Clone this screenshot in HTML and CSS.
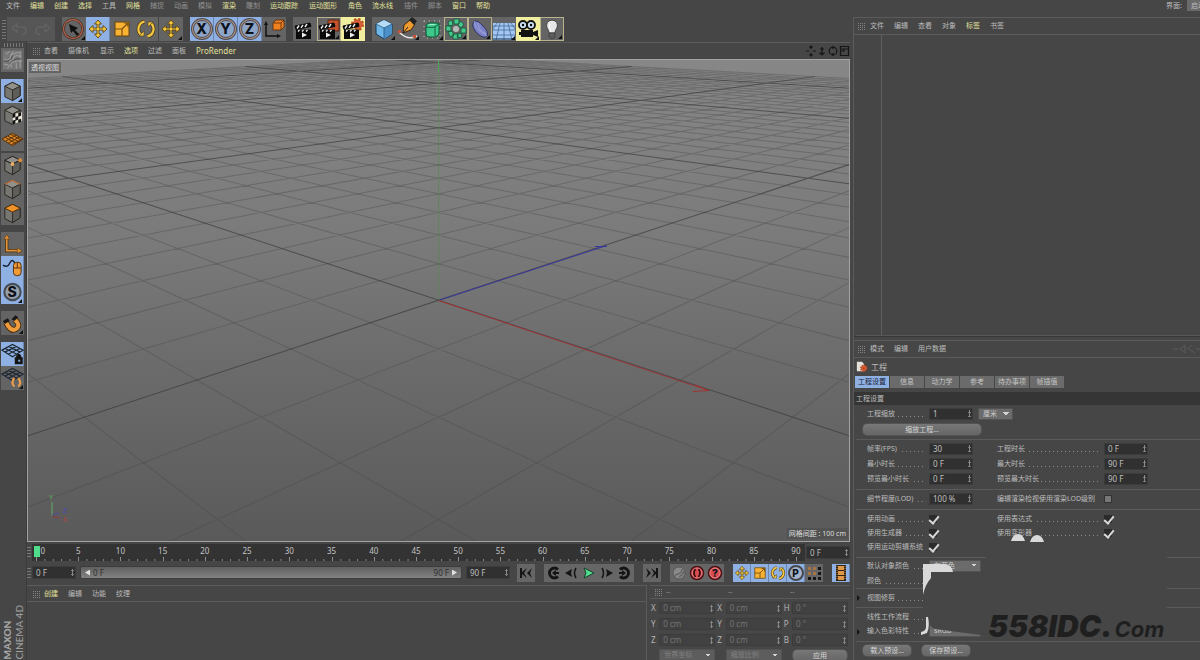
FILE: index.html
```html
<!DOCTYPE html>
<html lang="zh-CN">
<head>
<meta charset="utf-8">
<title>CINEMA 4D</title>
<link rel="stylesheet" href="styles.css">
</head>
<body>
<svg class="defs" aria-hidden="true">
  <symbol id="undo" viewBox="0 0 24 24"><path d="M5 11l5-4v3h5q4 0 4 4t-4 3M5 11l5 4v-3" fill="none" stroke="#636363" stroke-width="1.5"/></symbol>
  <symbol id="redo" viewBox="0 0 24 24"><path d="M19 11l-5-4v3H9q-4 0-4 4t4 3M19 11l-5 4v-3" fill="none" stroke="#636363" stroke-width="1.5"/></symbol>
  <symbol id="pick" viewBox="0 0 24 24"><circle cx="11" cy="12" r="9.500" fill="none" stroke="#3a2722" stroke-width="2.500"/><circle cx="11" cy="12" r="9.500" fill="none" stroke="#b0614a" stroke-width="1.300"/><path d="M7 7l2 9 2-2 4 5 2-2-4-4 3-2z" fill="#111"/></symbol>
  <symbol id="move" viewBox="0 0 24 24"><path d="M12 3l3.500 4H13v4h4V8.500l4 3.500-4 3.500V13h-4v4h2.500L12 21l-3.500-4H11v-4H7v2.500L3 12l4-3.500V11h4V7H8.500z" fill="#f6c83d" stroke="#594215" stroke-width=".9"/></symbol>
  <symbol id="scale" viewBox="0 0 24 24"><path d="M5 5h14v14H5z" fill="#f9b233" stroke="#66430f"/><path d="M5 12h7v7M12 12l6-6M14 6h4v4" fill="none" stroke="#76500f" stroke-width="1.200"/></symbol>
  <symbol id="rot" viewBox="0 0 24 24"><path d="M10.500 4.700a7.500 7.500 0 0 0-3.500 13M13.500 19.300a7.500 7.500 0 0 0 3.500-13" fill="none" stroke="#4d3b16" stroke-width="3.800"/><path d="M10.500 4.700a7.500 7.500 0 0 0-3.500 13M13.500 19.300a7.500 7.500 0 0 0 3.500-13" fill="none" stroke="#f2c643" stroke-width="2.200"/><path d="M5 19h5v-5zM19 5h-5v5z" fill="#f2c643" stroke="#4d3b16" stroke-width=".6"/></symbol>
  <symbol id="ring" viewBox="0 0 24 24"><circle cx="12" cy="12" r="9.500" fill="#8ea5c8" stroke="#4a4a50" stroke-width="3"/><circle cx="12" cy="12" r="9.500" fill="none" stroke="#a98f80" stroke-width="1.200"/></symbol>
  <symbol id="coord" viewBox="0 0 24 24"><path d="M4 7v12h13" fill="none" stroke="#111" stroke-width="1.500"/><path d="M2 8l2-4 2 4zM15 17l4 2-4 2z" fill="#111"/><path d="M11 6l3-3h8v7l-3 3h-8z" fill="#ef8120" stroke="#56290b" stroke-width=".8"/><path d="M11 6h8v7M19 6l3-3" fill="none" stroke="#56290b" stroke-width=".8"/></symbol>
  <symbol id="clap" viewBox="0 0 24 24"><path d="M3 13h15v9H3z" fill="#0b0b0b"/><path d="M3 12.500L2 9l15-3 1 3.500zM3 13h15" fill="#0b0b0b" stroke="#0b0b0b"/><path d="M4 11.500l2-3M8 10.800l2-3M12 10l2-3M5 14.500l1.500-1.500M9 14.500l1.500-1.500M13 14.500l1.500-1.500" stroke="#eee" stroke-width="1.400"/><path d="M9 15.500l5 2.500-5 2.500z" fill="#eee"/></symbol>
  <symbol id="clapbox" viewBox="0 0 24 24"><path d="M11 3h11v11H11z" fill="#c4522c" stroke="#5d2311"/><use href="#clap"/></symbol>
  <symbol id="gear" viewBox="0 0 24 24"><circle cx="12" cy="12" r="8" fill="none" stroke="#c24e27" stroke-width="5" stroke-dasharray="3.500 2.780"/><circle cx="12" cy="12" r="7.500" fill="#dc6035" stroke="#a8431f"/><circle cx="12" cy="12" r="3" fill="#a53d1e"/></symbol>
  <symbol id="clapgear" viewBox="0 0 24 24"><use href="#gear" x="9" y="0" width="15" height="15"/><use href="#clap"/></symbol>
  <symbol id="cubeblue" viewBox="0 0 24 24"><path d="M12 3l8 4v10l-8 5-8-5V7z" fill="#6fb6e9" stroke="#173955"/><path d="M4 7l8-4 8 4-8 4z" fill="#b4dcf6"/><path d="M12 11l8-4v10l-8 5z" fill="#4a91c9"/><path d="M4 7l8 4 8-4M12 11v10" fill="none" stroke="#25567e" stroke-width=".8"/></symbol>
  <symbol id="pen" viewBox="0 0 24 24"><path d="M3 15q9 9 18 4" fill="none" stroke="#e5e5e5" stroke-width="1.500"/><path d="M7 16l1-8 6-5 5 4-4 6z" fill="#ee9b32" stroke="#3c250b"/><path d="M13 3l3-3 5 4-3 4z" fill="#242424"/><path d="M7 16l5-6" stroke="#222"/><path d="M2 13h3v3H2zM17 18h3v3h-3z" fill="#c7533a"/></symbol>
  <symbol id="sds" viewBox="0 0 24 24"><path d="M4 4h16v17H4z" fill="none" stroke="#b8c6bd" stroke-width="1" stroke-dasharray="1 4"/><path d="M6 9q0-2 3-3h8q3 0 2 3v7q0 3-4 4H9q-3 0-3-3z" fill="#3ec98b" stroke="#0d5534"/><path d="M6 10q5 1 9 0l4-3M15 10v9" fill="none" stroke="#116040"/><path d="M8 8l2-1h6l-2 1z" fill="#a6f2cb"/></symbol>
  <symbol id="array" viewBox="0 0 24 24"><g fill="#45c889" stroke="#135638" stroke-width=".8"><path d="M10 2h5v5h-5zM16 4l4 3-3 4-3-3zM17 11h5v5h-5zM14 16l4 1-1 4-4-1zM9 17h5v5H9zM4 15l4-1 2 4-4 2zM2 9h5v5H2zM4 5l4-2 1 5-4 1z"/></g><circle cx="12" cy="12" r="3" fill="#b4bdb8"/></symbol>
  <symbol id="bend" viewBox="0 0 24 24"><path d="M6 4q-4 6 5 14 6 4 8 1 2-4-4-10-5-6-9-5z" fill="#7c82c7" stroke="#2e315f"/><path d="M6 4q0 6 6 10t7 5M10 6q0 7 8 11" fill="none" stroke="#a4a8dc" stroke-width=".8"/></symbol>
  <symbol id="floor" viewBox="0 0 24 24"><path d="M1 6h22v17H1z" fill="#a3c7f0"/><path d="M1 9h22M1 13h22M1 18h22M12 6v17M8 6L4 23M16 6l4 17M5 6l-4 6M19 6l4 6" stroke="#456b9c" stroke-width=".8" fill="none"/><path d="M1 22h22" stroke="#1b3050"/></symbol>
  <symbol id="cam" viewBox="0 0 24 24"><circle cx="7" cy="8" r="4" fill="#cddff2" stroke="#111" stroke-width="1.800"/><circle cx="15" cy="8" r="4" fill="#cddff2" stroke="#111" stroke-width="1.800"/><circle cx="7" cy="8" r="1.200"/><circle cx="15" cy="8" r="1.200"/><path d="M5 13h12v2l5-2v7l-5-2v2H5v-2H3v-3h2z" fill="#101010"/></symbol>
  <symbol id="bulb" viewBox="0 0 24 24"><path d="M9 16q0-3-2-5-2-7 5-8 7 1 5 8-2 2-2 5z" fill="#e6e6e6" stroke="#444"/><path d="M10 7q-2 3 1 8" stroke="#fff" fill="none"/><path d="M9 16h6v4l-3 2-3-2z" fill="#5e5e5e" stroke="#333" stroke-width=".7"/></symbol>
  <symbol id="mesh" viewBox="0 0 24 24"><path d="M2 2h20v20H2z" fill="#777"/><path d="M3 11q5 3 7-2t11-5M3 16q7 3 9-4t9-3M7 21q2-9 15-8M13 3q-6 5-2 17M5 6l4-3M16 15v6M20 5v15" fill="none" stroke="#999" stroke-width="1.300"/><path d="M3 13q7 2 9-6M8 17q6-8 13-6" fill="none" stroke="#4c4c4c"/></symbol>
  <symbol id="cube" viewBox="0 0 24 24"><path d="M12 3l8 4v10l-8 5-8-4V7z" fill="#777772" stroke="#292522"/><path d="M4 7l8-4 8 4-8 4z" fill="#92908b" stroke="#302b25"/><path d="M12 11l8-4v10l-8 5z" fill="#5e5d59" stroke="#302b25"/></symbol>
  <symbol id="tex" viewBox="0 0 24 24"><use href="#cube"/><path d="M12 11l10-2v9l-10 4z" fill="#eee8dc"/><path d="M12 11l3-1v4l-3 1zM18 9.800l3-.6v3.600l-3 1zM15 14l3-1v4l-3 1zM12 18l3-1v3.800l-3 1.200zM18 17l3-1v3l-3 1z" fill="#111"/></symbol>
  <symbol id="plane" viewBox="0 0 24 24"><path d="M1 12l11-6 11 6-11 7z" fill="#d88427" stroke="#553007"/><path d="M4 10l12 7M7 9l12 6M10 7l11 6M5 14L16 8M8 16l11-6M11 18l11-6" stroke="#553007"/></symbol>
  <symbol id="points" viewBox="0 0 24 24"><use href="#cube"/><path d="M4 7l8 4 8-4" fill="none" stroke="#29241f"/><circle cx="12" cy="11" r="2" fill="#efae5c"/><circle cx="20" cy="7" r="2" fill="#e48f35"/></symbol>
  <symbol id="edges" viewBox="0 0 24 24"><use href="#cube"/><path d="M4 7l8-4 8 4" fill="none" stroke="#c9783e" stroke-width="1.200"/></symbol>
  <symbol id="polys" viewBox="0 0 24 24"><use href="#cube"/><path d="M4 7l8-4 8 4-8 4z" fill="#ef9228" stroke="#5e350c"/></symbol>
  <symbol id="axis" viewBox="0 0 24 24"><path d="M6 4v15h14" fill="none" stroke="#462c0d" stroke-width="3.400"/><path d="M6 4v15h14" fill="none" stroke="#e2933a" stroke-width="1.800"/><path d="M3 7l3-5 3 5zM17 16l5 3-5 3z" fill="#e2933a" stroke="#462c0d" stroke-width=".5"/></symbol>
  <symbol id="mouse" viewBox="0 0 24 24"><path d="M2 9q5 3 7-2 3-6 6 1" fill="none" stroke="#172236" stroke-width="1.500"/><rect x="13" y="6" width="8" height="14" rx="3.500" fill="#f29a36" stroke="#51300d"/><path d="M13 12h8M17 6v6" stroke="#51300d"/></symbol>
  <symbol id="snaps" viewBox="0 0 24 24"><circle cx="12" cy="12" r="8.500" fill="#98a0aa" stroke="#454b54" stroke-width="2.200"/></symbol>
  <symbol id="magnet" viewBox="0 0 24 24"><path d="M5 11l3 5q4 5 8 2 5-4-2-10" fill="none" stroke="#45280a" stroke-width="6"/><path d="M5 11l3 5q4 5 8 2 5-4-2-10" fill="none" stroke="#ef9d3c" stroke-width="4.200"/><path d="M2 10l5-3 2 3-5 3zM11 8l4-4 3 2-4 4z" fill="#171717"/></symbol>
  <symbol id="wire" viewBox="0 0 24 24"><path d="M1 8l11-6 11 6-11 7zM4 6l12 6M8 4l12 6M4 10l12-6M8 12l12-6" fill="none" stroke="#1d2733" stroke-width="1.300"/></symbol>
  <symbol id="wirelock" viewBox="0 0 24 24"><use href="#wire"/><path d="M15 16h7v6h-7zM16.500 16v-2q2-3 4 0v2" fill="#151515" stroke="#151515" stroke-width="1.300"/><path d="M18 18h2v2h-2z" fill="#8eb0df"/></symbol>
  <symbol id="wirerot" viewBox="0 0 24 24"><use href="#wire"/><path d="M14 12q-4 5 0 9M18 12q4 5 0 9" fill="none" stroke="#e99d4a" stroke-width="2.200"/></symbol>
  <symbol id="first" viewBox="0 0 18 18"><path d="M3 4h2v4l5-4-3 5 3 5-5-4v4H3zM10 9l5-5-2 5 2 5z" fill="#151515"/></symbol>
  <symbol id="last" viewBox="0 0 18 18"><path d="M15 4h-2v4L8 4l3 5-3 5 5-4v4h2zM8 9L3 4l2 5-2 5z" fill="#151515"/></symbol>
  <symbol id="prevkey" viewBox="0 0 18 18"><path d="M14 5.500A5 5 0 1 0 14 12.500" fill="none" stroke="#151515" stroke-width="2.800"/><path d="M8 9l4-3v2h3v2h-3v2z" fill="#151515"/></symbol>
  <symbol id="nextkey" viewBox="0 0 18 18"><path d="M4 5.500A5 5 0 1 1 4 12.500" fill="none" stroke="#151515" stroke-width="2.800"/><path d="M10 9L6 6v2H3v2h3v2z" fill="#151515"/></symbol>
  <symbol id="prev" viewBox="0 0 18 18"><path d="M3 9l7-4-1 4 1 4z" fill="#151515"/><path d="M14 4q-3 5 0 10" fill="none" stroke="#151515" stroke-width="1.500"/></symbol>
  <symbol id="next" viewBox="0 0 18 18"><path d="M15 9L8 5l1 4-1 4z" fill="#151515"/><path d="M4 4q3 5 0 10" fill="none" stroke="#151515" stroke-width="1.500"/></symbol>
  <symbol id="play" viewBox="0 0 18 18"><path d="M4 4l10 5-10 5 2-5z" fill="#54df91" stroke="#133f28"/></symbol>
  <symbol id="key" viewBox="0 0 18 18"><circle cx="9" cy="9" r="6" fill="#898989" stroke="#5b5b5b"/><path d="M5 14q-1-3 3-4 4-1 4-5M9 13q4-2 5-6" fill="none" stroke="#636363" stroke-width="1.300"/></symbol>
  <symbol id="red" viewBox="0 0 18 18"><circle cx="9" cy="9" r="6.500" fill="#d84d50" stroke="#4b1215" stroke-width="1.500"/><circle cx="9" cy="9" r="5" fill="none" stroke="#ef9a98" stroke-width=".7"/></symbol>
  <symbol id="record" viewBox="0 0 18 18"><use href="#red"/><path d="M7.500 5q-3 4 0 8M10.500 5q3 4 0 8" fill="none" stroke="#360d10" stroke-width="1.700"/></symbol>
  <symbol id="pring" viewBox="0 0 18 18"><circle cx="9" cy="9" r="7" fill="#a5b4cb" stroke="#45474c" stroke-width="2"/></symbol>
  <symbol id="dots" viewBox="0 0 18 18"><path d="M3 3h3v3H3zM8 3h3v3H8zM3 8h3v3H3zM8 8h3v3H8z" fill="#a77343"/><path d="M13 3h3v3h-3zM13 8h3v3h-3zM3 13h3v3H3zM8 13h3v3H8zM13 13h3v3h-3z" fill="#151515"/></symbol>
  <symbol id="film" viewBox="0 0 18 18"><path d="M4 1h10v16H4z" fill="#302313"/><path d="M6 2h6v4H6zM6 7h6v4H6zM6 12h6v4H6z" fill="#df9848"/><path d="M5 2v14M13 2v14" stroke="#b98b55" stroke-dasharray="1 1"/></symbol>
  <symbol id="project" viewBox="0 0 14 14"><path d="M1 1h6l2 2v9H1z" fill="#e4e1db"/><use href="#gear" x="4" y="3" width="10" height="11"/></symbol>
</svg>

<header class="menubar">
  <nav class="menu" aria-label="主菜单">
    <button>文件</button><button class="hot">编辑</button><button class="hot">创建</button><button class="hot">选择</button><button>工具</button><button class="hot">网格</button><button class="dim">捕捉</button><button class="dim">动画</button><button class="dim">模拟</button><button class="hot">渲染</button><button class="dim">雕刻</button><button class="hot w4">运动跟踪</button><button class="hot w4">运动图形</button><button class="hot">角色</button><button class="hot w3">流水线</button><button class="dim">插件</button><button class="dim">脚本</button><button class="hot">窗口</button><button class="hot">帮助</button>
  </nav>
  <label class="layout">界面: <select><option>启动</option></select></label>
</header>

<div class="app">
  <div class="work">
    <div class="toolbar">
      <span class="grip-v"></span>
      <div class="group undo-group"><button class="tool" aria-label="撤销"><svg><use href="#undo"/></svg></button><button class="tool" aria-label="重做"><svg><use href="#redo"/></svg></button></div>
      <div class="group"><button class="tool more" aria-label="选择"><svg><use href="#pick"/></svg></button><button class="tool on" aria-label="移动"><svg><use href="#move"/></svg></button><button class="tool" aria-label="缩放"><svg><use href="#scale"/></svg></button><button class="tool" aria-label="旋转"><svg><use href="#rot"/></svg></button></div>
      <div class="group near"><button class="tool more" aria-label="当前工具"><svg><use href="#move"/></svg></button></div>
      <div class="group"><button class="tool on letter"><svg><use href="#ring"/></svg><b>X</b></button><button class="tool on letter"><svg><use href="#ring"/></svg><b>Y</b></button><button class="tool on letter"><svg><use href="#ring"/></svg><b>Z</b></button><button class="tool" aria-label="坐标系统"><svg><use href="#coord"/></svg></button></div>
      <div class="group"><button class="tool" aria-label="渲染视图"><svg><use href="#clap"/></svg></button><button class="tool more edge" aria-label="渲染到图片"><svg><use href="#clapbox"/></svg></button><button class="tool glow" aria-label="渲染设置"><svg><use href="#clapgear"/></svg></button></div>
      <div class="group"><button class="tool more" aria-label="立方体"><svg><use href="#cubeblue"/></svg></button><button class="tool more" aria-label="画笔"><svg><use href="#pen"/></svg></button><button class="tool more" aria-label="细分曲面"><svg><use href="#sds"/></svg></button><button class="tool more edge" aria-label="阵列"><svg><use href="#array"/></svg></button><button class="tool more edge" aria-label="弯曲"><svg><use href="#bend"/></svg></button><button class="tool more" aria-label="地面"><svg><use href="#floor"/></svg></button><button class="tool more glow" aria-label="摄像机"><svg><use href="#cam"/></svg></button><button class="tool more edge" aria-label="灯光"><svg><use href="#bulb"/></svg></button></div>
    </div>

    <div class="stage">
      <aside class="sidebar">
        <span class="grip-h"></span>
        <div class="stack"><button class="tool" aria-label="转为可编辑"><svg><use href="#mesh"/></svg></button></div>
        <div class="stack"><button class="tool on more" aria-label="模型"><svg><use href="#cube"/></svg></button><button class="tool" aria-label="纹理"><svg><use href="#tex"/></svg></button><button class="tool" aria-label="工作平面"><svg><use href="#plane"/></svg></button></div>
        <div class="stack tight"><button class="tool" aria-label="点"><svg><use href="#points"/></svg></button><button class="tool" aria-label="边"><svg><use href="#edges"/></svg></button><button class="tool" aria-label="多边形"><svg><use href="#polys"/></svg></button></div>
        <div class="stack"><button class="tool" aria-label="启用轴心"><svg><use href="#axis"/></svg></button><button class="tool on" aria-label="微调"><svg><use href="#mouse"/></svg></button><button class="tool on more letter"><svg><use href="#snaps"/></svg><b>S</b></button></div>
        <div class="stack"><button class="tool more" aria-label="启用捕捉"><svg><use href="#magnet"/></svg></button></div>
        <div class="stack"><button class="tool on" aria-label="锁定工作平面"><svg><use href="#wirelock"/></svg></button><button class="tool more" aria-label="平直工作平面"><svg><use href="#wirerot"/></svg></button></div>
        <div class="brand"><b>MAXON</b><span>CINEMA 4D</span></div>
      </aside>

      <main class="center">
        <div class="panelbar viewbar">
          <span class="grip"></span>
          <nav class="menu" aria-label="视图菜单"><button>查看</button><button class="w3">摄像机</button><button>显示</button><button class="hot">选项</button><button>过滤</button><button>面板</button><button class="hot latin">ProRender</button></nav>
          <svg class="viewicons" viewBox="0 0 44 12"><g fill="none" stroke="#161616" stroke-width="1.200"><path d="M5 1v3M5 8v3M0 6h3M7 6h3M3.500 2.500L5 1l1.500 1.500M3.500 9.500L5 11l1.500-1.500M16 2v8M13.500 7.500L16 10l2.500-2.500M14 4h4"/><circle cx="27" cy="6" r="3.800"/><path d="M27 1v3M27 8v3M34.500 1.500h8v9h-8zM34.500 4h8M38 4v2h-3"/></g></svg>
        </div>
        <section class="viewport" aria-label="透视视图">
          <svg class="scene" viewBox="28 59 820 482" preserveAspectRatio="xMidYMid slice">
            <path id="minor" class="minor"/><path id="major" class="major"/>
            <path class="green" d="M438 60V300"/><path class="green top" d="M438 60V72"/>
            <path class="blue" d="M438 300L606 245M594 246H606"/>
            <path class="redline" d="M438 300L708 390M694 384L708 390L692 391"/>
          </svg>
          <span class="badge name">透视视图</span>
          <span class="badge spacing">网格间距 : 100 cm</span>
          <svg class="gizmo" viewBox="0 0 24 32"><path d="M5 10v14" stroke="#62ad69"/><path d="M5 23l7-2" stroke="#4b4b9f"/><path d="M5 24l8 2" stroke="#913b3b"/><text x="2" y="8" fill="#54b35c">Y</text><text x="16" y="21" fill="#4747bd">Z</text><text x="16" y="30" fill="#bd3d3d">X</text></svg>
        </section>

        <div class="timeline">
          <span class="grip-v"></span>
          <div class="ruler">
            <i class="playhead"></i>
            <div class="seg zero"><span>0</span></div><div class="seg"><span>5</span></div><div class="seg"><span>10</span></div><div class="seg"><span>15</span></div><div class="seg"><span>20</span></div><div class="seg"><span>25</span></div><div class="seg"><span>30</span></div><div class="seg"><span>35</span></div><div class="seg"><span>40</span></div><div class="seg"><span>45</span></div><div class="seg"><span>50</span></div><div class="seg"><span>55</span></div><div class="seg"><span>60</span></div><div class="seg"><span>65</span></div><div class="seg"><span>70</span></div><div class="seg"><span>75</span></div><div class="seg"><span>80</span></div><div class="seg"><span>85</span></div><div class="seg end"><span>90</span></div>
          </div>
          <input class="num" value="0 F" aria-label="当前帧">
        </div>

        <div class="transport">
          <span class="grip-v"></span>
          <input class="num" value="0 F" aria-label="起始帧">
          <div class="range"><span><i class="tri back"></i>0 F</span><span>90 F<i class="tri fore"></i></span></div>
          <input class="num" value="90 F" aria-label="结束帧">
          <div class="keys">
            <div><button class="key" aria-label="转到开始"><svg><use href="#first"/></svg></button></div>
            <div><button class="key" aria-label="上一关键帧"><svg><use href="#prevkey"/></svg></button><button class="key" aria-label="上一帧"><svg><use href="#prev"/></svg></button><button class="key" aria-label="播放"><svg><use href="#play"/></svg></button><button class="key" aria-label="下一帧"><svg><use href="#next"/></svg></button><button class="key" aria-label="下一关键帧"><svg><use href="#nextkey"/></svg></button></div>
            <div><button class="key" aria-label="转到结束"><svg><use href="#last"/></svg></button></div>
            <div><button class="key" aria-label="记录活动对象"><svg><use href="#key"/></svg></button><button class="key" aria-label="自动关键帧"><svg><use href="#record"/></svg></button><button class="key letter"><svg><use href="#red"/></svg><b>?</b></button></div>
            <div><button class="key on" aria-label="位置"><svg><use href="#move"/></svg></button><button class="key on" aria-label="缩放"><svg><use href="#scale"/></svg></button><button class="key on" aria-label="旋转"><svg><use href="#rot"/></svg></button><button class="key on letter"><svg><use href="#pring"/></svg><b>P</b></button><button class="key" aria-label="点级别动画"><svg><use href="#dots"/></svg></button></div>
            <div><button class="key on" aria-label="动画模式"><svg><use href="#film"/></svg></button></div>
          </div>
        </div>

        <div class="bottom">
          <section class="materials">
            <div class="panelbar"><span class="grip"></span><nav class="menu" aria-label="材质菜单"><button class="hot">创建</button><button>编辑</button><button>功能</button><button>纹理</button></nav></div>
          </section>
          <section class="coords">
            <div class="coordhead"><span class="grip"></span><span>--</span><span>--</span><span>--</span></div>
            <div class="coordgrid">
              <label>X<input class="num" value="0 cm"></label><label>X<input class="num" value="0 cm"></label><label>H<input class="num" value="0 °"></label>
              <label>Y<input class="num" value="0 cm"></label><label>Y<input class="num" value="0 cm"></label><label>P<input class="num" value="0 °"></label>
              <label>Z<input class="num" value="0 cm"></label><label>Z<input class="num" value="0 cm"></label><label>B<input class="num" value="0 °"></label>
              <select class="drop" aria-label="坐标"><option>世界坐标</option></select><select class="drop" aria-label="比例"><option>缩放比例</option></select><button class="pill">应用</button>
            </div>
          </section>
        </div>
      </main>
    </div>
  </div>

  <aside class="right">
    <section class="objects">
      <div class="panelbar"><span class="grip"></span><nav class="menu" aria-label="对象菜单"><button>文件</button><button>编辑</button><button>查看</button><button>对象</button><button class="hot">标签</button><button>书签</button></nav></div>
      <div class="tree"></div>
    </section>
    <section class="attrs">
      <div class="panelbar"><span class="grip"></span><nav class="menu" aria-label="属性菜单"><button>模式</button><button>编辑</button><button>用户数据</button></nav><svg class="history" viewBox="0 0 28 12"><path d="M1 6h6M8 6l5-4v8zM15 6l5-4M17 6l6 4M24 6h4" fill="none" stroke="#5a5a5a"/></svg></div>
      <div class="title"><svg><use href="#project"/></svg><span>工程</span></div>
      <div class="tabs"><button class="on">工程设置</button><button>信息</button><button>动力学</button><button>参考</button><button>待办事项</button><button>帧插值</button></div>
      <h2>工程设置</h2>
      <div class="block first">
        <div class="row"><label class="lead" for="scale-in">工程缩放</label><div class="pair"><input id="scale-in" class="num" value="1"><select class="drop" aria-label="单位"><option>厘米</option></select></div></div>
        <button class="pill wide">缩放工程...</button>
      </div>
      <div class="block">
        <div class="row"><label class="lead" for="fps">帧率(FPS)</label><input id="fps" class="num" value="30"><label class="lead" for="dur">工程时长</label><input id="dur" class="num" value="0 F"></div>
        <div class="row"><label class="lead" for="min">最小时长</label><input id="min" class="num" value="0 F"><label class="lead" for="max">最大时长</label><input id="max" class="num" value="90 F"></div>
        <div class="row"><label class="lead" for="pmin">预览最小时长</label><input id="pmin" class="num" value="0 F"><label class="lead" for="pmax">预览最大时长</label><input id="pmax" class="num" value="90 F"></div>
      </div>
      <div class="block">
        <div class="row"><label class="lead" for="lod">细节程度(LOD)</label><input id="lod" class="num" value="100 %"><label class="plain" for="rlod">编辑渲染检视使用渲染LOD级别</label><input id="rlod" class="tick" type="checkbox"></div>
      </div>
      <div class="block checks">
        <div class="row"><label class="lead" for="c1">使用动画</label><input id="c1" class="tick" type="checkbox" checked><label class="lead" for="c2">使用表达式</label><input id="c2" class="tick" type="checkbox" checked></div>
        <div class="row"><label class="lead" for="c3">使用生成器</label><input id="c3" class="tick" type="checkbox" checked><label class="lead" for="c4">使用变形器</label><input id="c4" class="tick" type="checkbox" checked></div>
        <div class="row"><label class="lead" for="c5">使用运动剪辑系统</label><input id="c5" class="tick" type="checkbox" checked></div>
      </div>
      <div class="block flush">
        <div class="row"><label class="lead" for="defcol">默认对象颜色</label><select id="defcol" class="drop broad"><option>灰蓝色</option></select></div>
        <div class="row"><span class="lead">颜色</span></div>
      </div>
      <div class="block one"><div class="row arrow"><span class="lead">视图修剪</span></div></div>
      <div class="block checks">
        <div class="row"><span class="lead">线性工作流程</span></div>
        <div class="row arrow"><label class="lead" for="prof">输入色彩特性</label><select id="prof" class="drop broad"><option>sRGB</option></select></div>
      </div>
      <div class="presets"><button class="pill">载入预设...</button><button class="pill">保存预设...</button></div>
      <div class="mark">
        <svg viewBox="0 0 250 116"><path fill="#464646" d="M65 12H246V100H90L60 104L14 98Q8 96 7 88L2 86V66Q2 48 24 42H62V28H65Z"/><path fill="#d9d9d9" d="M2 33H24Q31 34 32 41H10V47Q4 54 2 64ZM90 10Q92 3 97 3T104 10ZM109 11Q111 4 116 4T123 11ZM5 86h2q2 10-1 16l-6 2v-3q5-1 5-5z"/></svg>
        <p><b>558IDC.</b><span>Com</span></p>
      </div>
    </section>
  </aside>
</div>
<script src="script.js"></script>
</body>
</html>
```
FILE: styles.css
```css
* { box-sizing: border-box; }
body {
  margin: 0;
  height: 100vh;
  overflow: hidden;
  display: flex;
  flex-direction: column;
  background: #464646;
  color: #bcbcbc;
  font: 7px/12px "Noto Sans", "Noto Sans CJK SC", sans-serif;
}
button, input, select { font: inherit; color: inherit; margin: 0; border: 0; padding: 0; }
button { background: none; white-space: nowrap; }
.defs { position: absolute; width: 0; height: 0; }

.menubar { display: flex; justify-content: space-between; height: 16px; padding-left: 6px; flex: none; overflow: hidden; }
.menu { display: flex; }
.menu button { width: 24px; height: 12px; text-align: left; }
.menu .w3 { width: 32px; }
.menu .w4 { width: 39px; }
.menu .hot { color: #e2e09c; }
.menu .dim { color: #929292; }
.menu .latin { font-size: 8px; }
.layout { display: flex; gap: 5px; }
.layout select { width: 13px; height: 11px; appearance: none; background: #6a6a6a; padding-left: 4px; overflow: hidden; }

.app { flex: 1; display: flex; min-height: 0; gap: 3px; }
.work { flex: 1; min-width: 0; display: flex; flex-direction: column; }

.toolbar { display: flex; height: 26px; padding: 1px 2px; flex: none; }
.grip-v { width: 4px; margin: 2px 0; flex: none; background: radial-gradient(circle, #777 30%, transparent 45%) 0 0 / 2px 3px; }
.grip-h { height: 4px; width: 20px; align-self: center; background: radial-gradient(circle, #777 30%, transparent 45%) 0 0 / 3px 2px; }
.grip { width: 8px; height: 8px; flex: none; background: linear-gradient(90deg, #464646 1px, transparent 1px) 0 0 / 2px 2px, linear-gradient(#464646 1px, #838383 1px) 0 0 / 2px 2px; }
.group { display: flex; margin-left: 7px; }
.undo-group { margin-left: 1px; }
.group.near { margin-left: 1px; }
.tool { position: relative; width: 24px; height: 24px; background: #646464; flex: none; }
.tool svg { display: block; width: 24px; height: 24px; }
.undo-group .tool { background: #565656; }
.tool.on, .key.on { background: #8fb0e2; border-right: 1px solid #6d86ad; }
.tool.edge { border: 1px solid #b7b48e; }
.tool.edge svg { margin: -1px; }
.tool.glow { background: #f2eea0; }
.tool.more::after { content: ""; position: absolute; right: 1px; bottom: 1px; border: 2px solid; border-color: transparent #111 #111 transparent; }
.letter { position: relative; }
.letter b { position: absolute; inset: 0; color: #0d1119; font: 800 14px/24px Inter, sans-serif; text-align: center; }

.stage { flex: 1; display: flex; min-height: 0; }
.sidebar { width: 27px; flex: none; display: flex; flex-direction: column; padding: 1px 2px 0 1px; border-right: 1px solid #3b3b3b; }
.stack { margin-top: 7px; display: flex; flex-direction: column; }
.grip-h + .stack { margin-top: 1px; }
.stack.tight { margin-top: 2px; }
.stack .tool { width: 23px; }
.stack .tool svg { width: 23px; }
.brand { margin-top: auto; writing-mode: vertical-rl; transform: rotate(180deg); display: flex; flex-direction: column; align-self: flex-start; color: #a5a5a5; font: 10px/12px Lato, sans-serif; }
.brand b { font-weight: 900; }

.center { flex: 1; min-width: 0; display: flex; flex-direction: column; }
.panelbar { display: flex; align-items: center; height: 17px; padding-left: 5px; gap: 4px; border: 1px solid #5b5b5b; border-width: 1px 0; flex: none; }
.viewbar { border-bottom: 0; }
.viewicons, .history { margin-left: auto; }
.viewicons { width: 44px; height: 12px; }
.history { width: 28px; height: 12px; }

.viewport { position: relative; flex: 1; min-height: 0; border: 1px solid #a3a3a3; background: linear-gradient(#878787, #808080 20%, #7a7a7a 38%, #6b6b6b 64%, #5a5a5a); }
.scene { position: absolute; width: 100%; height: 100%; }
.scene path { fill: none; }
.minor { stroke: #484848; stroke-opacity: .38; }
.major { stroke: #303030; stroke-opacity: .6; }
.green { stroke: #4b8d4b; stroke-opacity: .55; }
.scene .top { stroke: #48b050; stroke-opacity: .8; }
.blue { stroke: #38389c; }
.redline { stroke: #a03434; }
.badge { position: absolute; padding: 0 2px; line-height: 11px; background: #636363; color: #dcdcdc; }
.badge.name { left: 1px; top: 2px; }
.badge.spacing { right: 1px; bottom: 2px; background: #525252; }
.gizmo { position: absolute; left: 19px; bottom: 17px; width: 24px; height: 32px; fill: none; }
.gizmo text { font: 7px "Noto Sans", sans-serif; }

.timeline { display: flex; height: 19px; padding-top: 2px; gap: 1px; flex: none; }
.ruler { position: relative; flex: 1; display: flex; padding: 0 8px 0 4px; background: #333; color: #c3c3c3; font-size: 8px; line-height: 14px; }
.seg { flex: 1; background: linear-gradient(90deg, #8b8b8b 1px, transparent 1px) 0 100% / 20% 2px repeat-x, linear-gradient(#909090, #909090) 0 100% / 1px 4px no-repeat; }
.seg span { display: flex; width: 0; justify-content: center; }
.seg.zero span { width: 12px; justify-content: flex-end; padding-right: 3px; }
.seg.end { flex: none; width: 1px; }
.playhead { position: absolute; left: 2px; top: 2px; width: 6px; height: 11px; background: #50dd8b; }
.num { width: 44px; height: 13px; padding: 0 3px; font-size: 8px; color: #bfbfbf; border: 1px solid #3c3c3c; background: linear-gradient(#888, #888) calc(100% - 2px) 50% / 1px 7px no-repeat, linear-gradient(#777, #777) calc(100% - 1px) 3px / 3px 1px no-repeat, linear-gradient(#777, #777) calc(100% - 1px) 7px / 3px 1px no-repeat, #303030; }
.timeline .num { margin-top: 2px; }
.transport { display: flex; align-items: center; height: 24px; gap: 4px; flex: none; padding-bottom: 1px; }
.transport .grip-v { height: 12px; margin: 0 -3px 0 0; }
.range { flex: 1; height: 13px; display: flex; justify-content: space-between; align-items: center; padding: 0 4px; background: linear-gradient(#606060, #828282); border-radius: 2px; color: #303030; font-size: 8px; border: 1px solid #3d3d3d; }
.range span { display: flex; align-items: center; gap: 3px; white-space: nowrap; }
.tri { width: 5px; height: 6px; background: #e0e0e0; }
.back { clip-path: polygon(0 50%, 100% 0, 100% 100%); }
.fore { clip-path: polygon(100% 50%, 0 0, 0 100%); }
.keys { display: flex; gap: 9px; margin-left: 3px; }
.keys div { display: flex; }
.key { width: 18px; height: 18px; background: #666; }
.key svg { display: block; width: 18px; height: 18px; }
.key.letter b { font: 800 10px/18px Inter, sans-serif; }

.bottom { display: flex; height: 75px; flex: none; gap: 3px; }
.materials { flex: 1; border-right: 1px solid #5a5a5a; }
.coords { width: 200px; flex: none; border-top: 1px solid #5a5a5a; overflow: hidden; color: #b5b5b5; }
.coordhead { height: 13px; display: grid; grid-template-columns: 12px 62px 62px 1fr; padding-left: 4px; align-items: center; border-bottom: 1px solid #5a5a5a; color: #989898; }
.coordgrid { display: grid; grid-template-columns: repeat(3, 1fr); column-gap: 2px; row-gap: 2px; padding: 2px 2px 0 1px; font-size: 8px; }
.coordgrid label { display: flex; align-items: center; justify-content: space-between; height: 14px; }
.coordgrid .num { width: 56px; height: 12px; color: #747474; background-color: #414141; }
.coordgrid .drop, .coordgrid .pill { width: 56px; justify-self: end; font-size: 7px; }
.coordgrid .drop { color: #818181; background-color: #5d5d5d; }

.drop { appearance: none; height: 12px; padding: 0 4px; font-size: 7px; line-height: 10px; border-radius: 1px; border: 1px solid #535353; color: #cacaca; background: conic-gradient(from 315deg at 50% 100%, #d4d4d4 90deg, transparent 0) calc(100% - 3px) 50% / 6px 3px no-repeat, #6b6b6b; }
.pill { height: 13px; line-height: 11px; border-radius: 5px; background: linear-gradient(#777, #666); color: #d6d6d6; border: 1px solid #535353; }

.right { width: 347px; flex: none; display: flex; flex-direction: column; border-left: 1px solid #5b5b5b; margin-top: 1px; }
.objects { flex: 1; min-height: 0; display: flex; flex-direction: column; border-bottom: 1px solid #383838; }
.objects .panelbar, .attrs .panelbar { padding-left: 3px; gap: 5px; height: 18px; }
.tree { flex: 1; margin-left: 2px; padding-left: 25px; background: linear-gradient(#5e5e5e, #5e5e5e) 25px 0 / 1px 100% no-repeat; border-bottom: 1px solid #585858; }
.attrs { position: relative; padding-top: 3px; flex: none; }
.menu button:last-child { width: auto; }
.title { display: flex; align-items: center; gap: 3px; height: 18px; padding-left: 2px; font-size: 8px; }
.title svg { width: 12px; height: 14px; }
.tabs { display: flex; gap: 1px; padding-left: 1px; }
.tabs button { width: 34px; height: 12px; line-height: 12px; background: #6b6b6b; color: #c6c6c6; }
.tabs .on { background: #8fb0e2; color: #17243a; }
h2 { margin: 4px 0 0; height: 13px; padding-left: 2px; font-size: 7px; font-weight: 400; line-height: 13px; background: #353535; }
.block { padding: 1px 0 3px; border-bottom: 1px solid #5a5a5a; margin-left: 2px; }
.row { display: grid; grid-template-columns: 62px 68px 107px 44px; align-items: center; height: 15px; padding-left: 11px; position: relative; }
.pair { display: flex; gap: 5px; }
.pair .drop { width: 35px; flex: none; }
.pair .num { flex: none; }
.row .num { height: 12px; }
.lead { display: flex; align-items: center; white-space: nowrap; margin-right: 3px; }
.lead::after { content: ""; flex: 1; height: 1px; margin: 5px 0 0 2px; background: linear-gradient(90deg, #8c8c8c 1px, transparent 1px) 100% 0 / 4px 1px; }
.plain { white-space: nowrap; }
.wide { display: block; width: 120px; margin: 2px 0 0 6px; }
.tick { appearance: none; width: 8px; height: 8px; background: #2b2b2b; position: relative; }
.tick:not(:checked) { background: #777; border: 1px solid #333; }
.tick:checked::after { content: ""; position: absolute; left: 2px; top: -1px; width: 4px; height: 8px; border: solid #d8d8d8; border-width: 0 2px 2px 0; transform: rotate(40deg); }
.checks { padding-top: 2px; }
.checks .row { height: 14px; }
.flush { padding: 0; }
.broad { width: 52px; }
.one { padding: 1px 0 2px; }
.arrow::before { content: ""; position: absolute; left: 1px; top: 5px; border: solid transparent; border-width: 3px 0 3px 3px; border-left-color: #161616; }
.presets { display: flex; gap: 9px; padding: 2px 0 3px 8px; }
.presets .pill { width: 50px; }

.mark { position: absolute; left: 67px; bottom: 13px; width: 250px; height: 116px; pointer-events: none; }
.mark svg { position: absolute; inset: 0; width: 250px; height: 116px; }
.mark p { position: absolute; left: 67px; bottom: 3px; margin: 0; display: flex; gap: 2px; align-items: baseline; color: #1f1f1f; font: italic 900 30px/30px Inter, sans-serif; }
.mark span { font-size: 22px; font-weight: 700; }
```
FILE: script.js
```js
// Ground plane in perspective: u and v run along the two floor axes,
// one unit per major line and ten minor cells per unit.
const centre = 438, horizon = 6.8, height = 411, spread = 887, eye = 1.403;
const extent = 3.5;

function project(u, v) {
  const depth = eye + u + v;
  return [centre + spread * (u - v) / depth, horizon + height / depth]
    .map(n => n.toFixed(1)).join(' ');
}

const paths = { minor: '', major: '' };
for (let i = -35; i <= 35; i++) {
  const c = i / 10;
  const near = Math.max(-extent, 0.4 - eye - c);
  if (near >= extent) continue;
  const kind = i % 10 === 0 ? 'major' : 'minor';
  paths[kind] += `M${project(c, near)}L${project(c, extent)}`;
  paths[kind] += `M${project(near, c)}L${project(extent, c)}`;
}
document.getElementById('minor').setAttribute('d', paths.minor);
document.getElementById('major').setAttribute('d', paths.major);
```
